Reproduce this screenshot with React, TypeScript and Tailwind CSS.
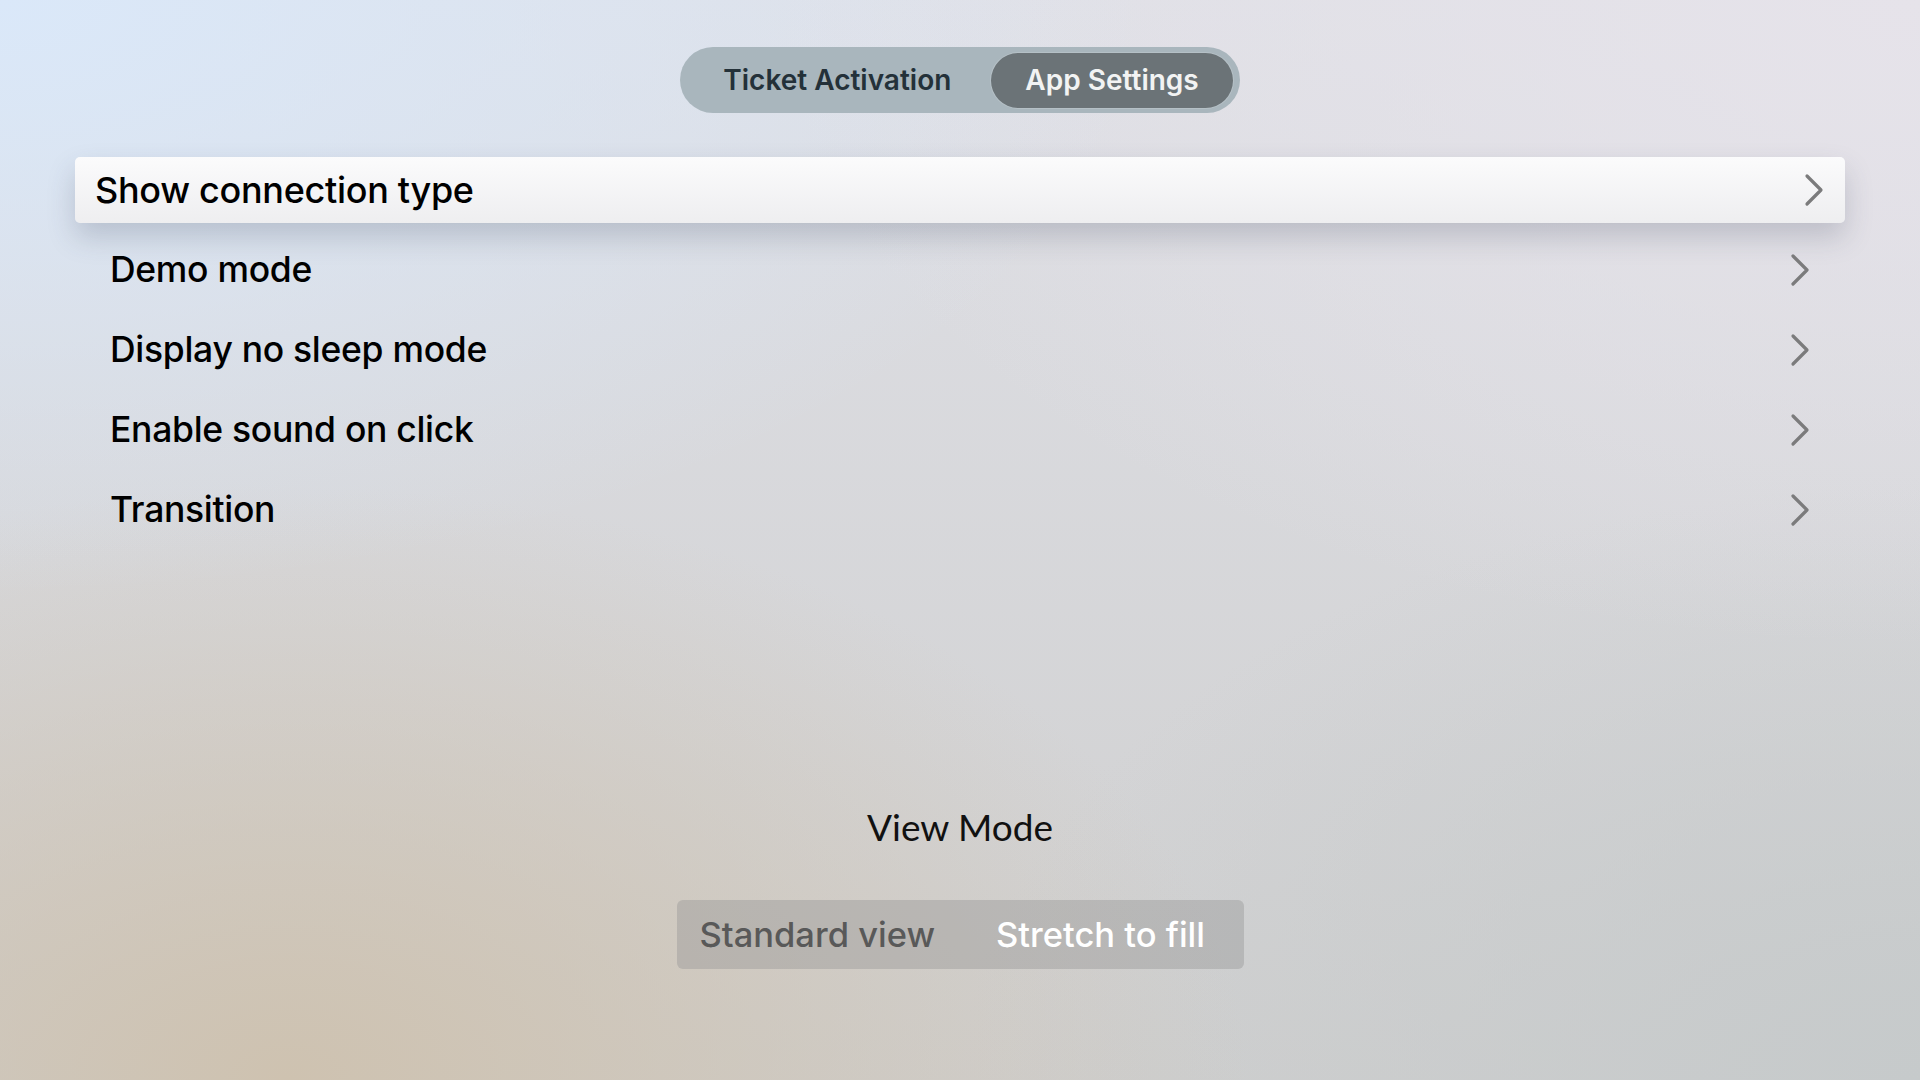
import { ReactNode } from 'react';

const ROWS = ['Demo mode', 'Display no sleep mode', 'Enable sound on click', 'Transition'];

function Chevron({ className }: { className?: string }) {
  return (
    <svg viewBox="0 0 20 34" className={className} fill="none">
      <path d="M3 3 L17 17 L3 31" stroke="#7b7b7c" strokeWidth="3.2" strokeLinecap="round" strokeLinejoin="round" />
    </svg>
  );
}

function Tab({ active, children }: { active?: boolean; children: ReactNode }) {
  return (
    <div
      className={`flex h-[55px] items-center justify-center rounded-full px-[34px] text-[28px] font-semibold ${
        active ? 'bg-[#6b7377] text-[#f2f3f3] shadow-[0_0_0_1px_rgba(255,255,255,0.15)]' : 'text-[#243139]'
      }`}
    >
      {children}
    </div>
  );
}

export default function App() {
  return (
    <div
      className="flex h-[1080px] w-[1920px] flex-col overflow-hidden bg-[radial-gradient(ellipse_60%_55%_at_0%_0%,#dae8f9_0%,rgba(218,232,249,0)_100%),radial-gradient(ellipse_50%_55%_at_15%_100%,#cec2b0_0%,rgba(206,194,176,0)_100%),radial-gradient(ellipse_60%_60%_at_100%_0%,#e6e3ea_0%,rgba(230,227,234,0)_100%),radial-gradient(ellipse_50%_55%_at_100%_100%,#c6cacb_0%,rgba(198,202,203,0)_100%),linear-gradient(#dfe0e6,#cfcfcf)]"
      style={{ fontFamily: 'Inter, "Noto Sans", sans-serif' }}
    >
      {/* Tabs */}
      <div className="flex justify-center pt-[47px]">
        <div className="flex h-[66px] items-center gap-[6px] rounded-full bg-[#a9b6bd] pl-[9px] pr-[7px]">
          <Tab>Ticket Activation</Tab>
          <Tab active>App Settings</Tab>
        </div>
      </div>

      {/* Settings list */}
      <div className="mt-[44px] flex flex-col">
        <div className="mx-[75px] flex h-[66px] items-center justify-between rounded-[5px] bg-[linear-gradient(#fbfbfc,#eeeef0)] pl-[20px] pr-[21px] shadow-[0_14px_28px_rgba(60,70,90,0.22)]">
          <span className="text-[36px] font-medium tracking-[-0.3px] text-black">Show connection type</span>
          <Chevron className="h-[34px] w-[20px]" />
        </div>
        <div className="mt-[7px] flex flex-col">
          {ROWS.map(r => (
            <div key={r} className="flex h-[80px] items-center justify-between pl-[110px] pr-[110px]">
              <span className="text-[35.5px] font-medium tracking-[-0.3px] text-black">{r}</span>
              <Chevron className="h-[34px] w-[20px]" />
            </div>
          ))}
        </div>
      </div>

      {/* View mode */}
      <div className="mt-[254px] flex flex-col items-center">
        <div className="h-[46px] text-[37px] font-normal leading-[46px] text-[#111]" style={{ fontFamily: 'Lato, sans-serif' }}>
          View Mode
        </div>
        <div className="mt-[50px] flex h-[69px] w-[567px] items-center rounded-[6px] bg-[rgba(150,150,150,0.42)] pl-[23px] text-[34.5px] font-medium">
          <span className="text-[#595959]">Standard view</span>
          <span className="ml-[61px] text-white">Stretch to fill</span>
        </div>
      </div>
    </div>
  );
}
